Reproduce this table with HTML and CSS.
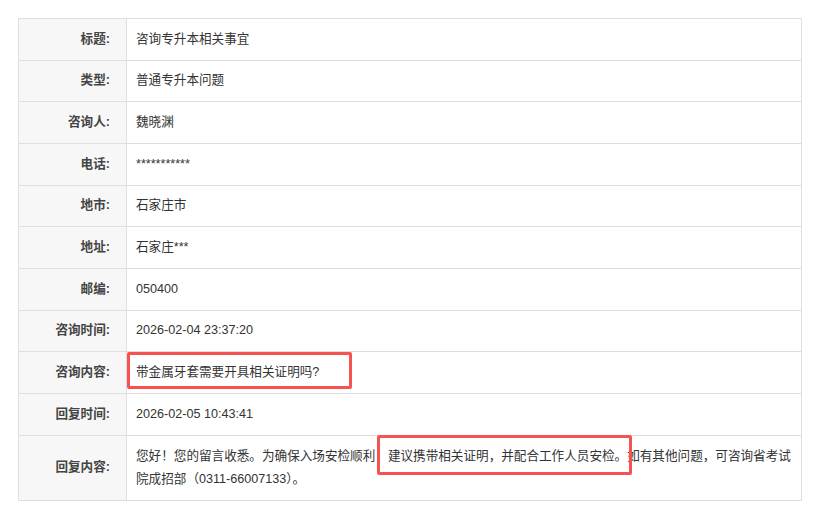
FILE: index.html
```html
<!DOCTYPE html>
<html lang="zh-CN">
<head>
    <meta charset="UTF-8">
    <title>咨询详情</title>
    <link rel="stylesheet" href="styles.css">
</head>
<body>
    <table class="detail">
        <tr>
            <th>标题:</th>
            <td>咨询专升本相关事宜</td>
        </tr>
        <tr>
            <th>类型:</th>
            <td>普通专升本问题</td>
        </tr>
        <tr>
            <th>咨询人:</th>
            <td>魏晓渊</td>
        </tr>
        <tr>
            <th>电话:</th>
            <td>***********</td>
        </tr>
        <tr>
            <th>地市:</th>
            <td>石家庄市</td>
        </tr>
        <tr>
            <th>地址:</th>
            <td>石家庄***</td>
        </tr>
        <tr>
            <th>邮编:</th>
            <td>050400</td>
        </tr>
        <tr>
            <th>咨询时间:</th>
            <td>2026-02-04 23:37:20</td>
        </tr>
        <tr>
            <th>咨询内容:</th>
            <td class="marked">带金属牙套需要开具相关证明吗?<span class="box box-ask"></span></td>
        </tr>
        <tr>
            <th>回复时间:</th>
            <td>2026-02-05 10:43:41</td>
        </tr>
        <tr class="tall">
            <th>回复内容:</th>
            <td class="marked">您好！您的留言收悉。为确保入场安检顺利，建议携带相关证明，并配合工作人员安检。如有其他问题，可咨询省考试院成招部（0311-66007133）。<span class="box box-reply"></span></td>
        </tr>
    </table>
</body>
</html>
```

FILE: styles.css
```css
body {
    margin: 0;
    padding: 18px;
    background-color: #fff;
    font-family: "Liberation Sans", "Noto Sans CJK SC", sans-serif;
    font-size: 12.6px;
    color: #333;
}

.detail {
    width: 100%;
    border-collapse: collapse;
    border: 1px solid #dfdfdf;
}

.detail tr {
    height: 41.67px;
}

.detail th,
.detail td {
    border: 1px solid #dfdfdf;
    line-height: 23px;
    padding: 0 8px 0 9px;
    vertical-align: middle;
}

.detail th {
    width: 91px;
    padding-left: 0;
    padding-right: 16px;
    background-color: #f7f7f7;
    text-align: right;
    font-weight: bold;
    color: #444;
    white-space: nowrap;
}

.detail td {
    text-align: left;
}

.detail .tall td,
.detail .tall th {
    padding-top: 9px;
    padding-bottom: 9px;
}

.marked {
    position: relative;
}

.box {
    position: absolute;
    border: 3px solid #f75252;
    border-radius: 2px;
    box-sizing: border-box;
}

.box-ask {
    left: 0;
    top: 0;
    width: 225px;
    height: 37px;
}

.box-reply {
    left: 250px;
    top: -1px;
    width: 255px;
    height: 40px;
}
```
